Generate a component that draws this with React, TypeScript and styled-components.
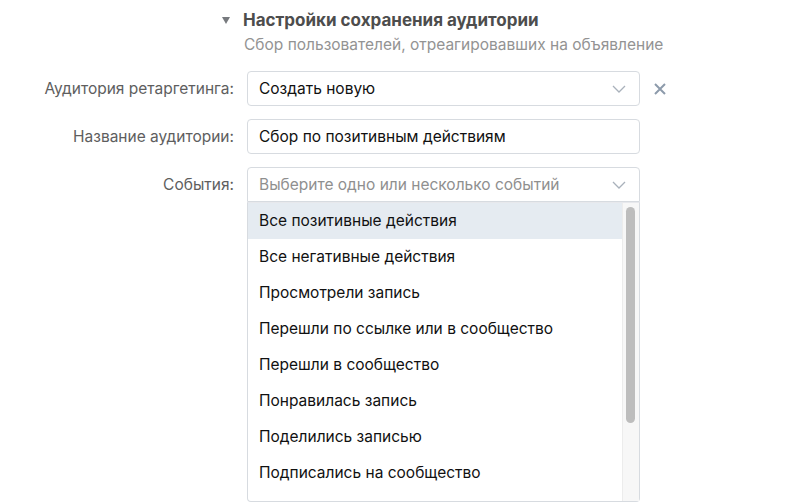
import React from 'react';
import styled, { createGlobalStyle } from 'styled-components';

const GlobalStyle = createGlobalStyle`
  html, body {
    margin: 0;
    padding: 0;
    background: #ffffff;
    font-family: Inter, "Liberation Sans", Arial, sans-serif;
  }
`;

const Page = styled.div`
  width: 807px;
  height: 502px;
  overflow: hidden;
  position: relative;
`;

const Section = styled.div`
  padding: 10px 0 0 220px;
`;

const HeaderRow = styled.div`
  display: flex;
  align-items: center;
  gap: 13px;
  height: 20px;
`;

const Triangle = styled.span`
  width: 0;
  height: 0;
  border-left: 4px solid transparent;
  border-right: 4px solid transparent;
  border-top: 7px solid #777a7e;
  margin-left: 2px;
`;

const Title = styled.h2`
  margin: 0;
  font-size: 17px;
  line-height: 20px;
  font-weight: 700;
  color: #4d4d4d;
`;

const Subtitle = styled.div`
  margin: 6px 0 0 24px;
  font-size: 15.5px;
  line-height: 18px;
  color: #939393;
`;

const Form = styled.div`
  display: grid;
  grid-template-columns: 234px 393px 40px;
  column-gap: 13px;
  row-gap: 13px;
  margin-top: 17px;
  align-items: center;
`;

const Label = styled.div`
  text-align: right;
  font-size: 15.5px;
  line-height: 18px;
  color: #5e5e5e;
`;

const Control = styled.div<{ $open?: boolean }>`
  position: relative;
  box-sizing: border-box;
  height: 35px;
  border: 1px solid #d7dbe0;
  border-radius: ${p => (p.$open ? '4px 4px 0 0' : '4px')};
  display: flex;
  align-items: center;
  padding: 0 11px;
  font-size: 15.5px;
  line-height: 18px;
  color: #000;
`;

const Value = styled.span<{ $placeholder?: boolean }>`
  flex: 1;
  color: ${p => (p.$placeholder ? '#8f8f8f' : '#111')};
`;

const Chevron = styled.svg`
  width: 14px;
  height: 8px;
  margin-right: 2px;
`;

const ClearButton = styled.svg`
  width: 12px;
  height: 12px;
  margin-left: 1px;
`;

const Menu = styled.div`
  position: absolute;
  left: -1px;
  right: -1px;
  top: 34px;
  height: 300px;
  box-sizing: border-box;
  border: 1px solid #d7dbe0;
  border-top-color: #e7e8ec;
  border-radius: 0 0 4px 4px;
  background: #fff;
  display: flex;
  z-index: 2;
`;

const Options = styled.div`
  flex: 1;
`;

const Option = styled.div<{ $active?: boolean }>`
  height: 36px;
  display: flex;
  align-items: center;
  padding-left: 11px;
  font-size: 15.5px;
  color: #111;
  background: ${p => (p.$active ? '#e5ebf1' : 'transparent')};
`;

const Track = styled.div`
  width: 17px;
  background: #f7f7f7;
  border-left: 1px solid #ececec;
  padding: 4px 0 0 3px;
  box-sizing: border-box;
`;

const Thumb = styled.div`
  width: 9px;
  height: 216px;
  border-radius: 5px;
  background: #bdbdbd;
`;

const options = [
  'Все позитивные действия',
  'Все негативные действия',
  'Просмотрели запись',
  'Перешли по ссылке или в сообщество',
  'Перешли в сообщество',
  'Понравилась запись',
  'Поделились записью',
  'Подписались на сообщество',
];

const ChevronIcon = () => (
  <Chevron viewBox="0 0 14 8">
    <path d="M1 1l6 6 6-6" fill="none" stroke="#a9b1bb" strokeWidth="1.3" />
  </Chevron>
);

export default function App() {
  return (
    <Page>
      <GlobalStyle />
      <Section>
        <HeaderRow>
          <Triangle />
          <Title>Настройки сохранения аудитории</Title>
        </HeaderRow>
        <Subtitle>Сбор пользователей, отреагировавших на объявление</Subtitle>
      </Section>

      <Form>
        <Label>Аудитория ретаргетинга:</Label>
        <Control>
          <Value>Создать новую</Value>
          <ChevronIcon />
        </Control>
        <ClearButton viewBox="0 0 12 12">
          <path d="M1 1l10 10M11 1L1 11" stroke="#8d9bab" strokeWidth="2" />
        </ClearButton>

        <Label>Название аудитории:</Label>
        <Control>
          <Value>Сбор по позитивным действиям</Value>
        </Control>
        <span />

        <Label>События:</Label>
        <Control $open>
          <Value $placeholder>Выберите одно или несколько событий</Value>
          <ChevronIcon />
          <Menu>
            <Options>
              {options.map((o, i) => (
                <Option key={o} $active={i === 0}>
                  {o}
                </Option>
              ))}
            </Options>
            <Track>
              <Thumb />
            </Track>
          </Menu>
        </Control>
        <span />
      </Form>
    </Page>
  );
}
